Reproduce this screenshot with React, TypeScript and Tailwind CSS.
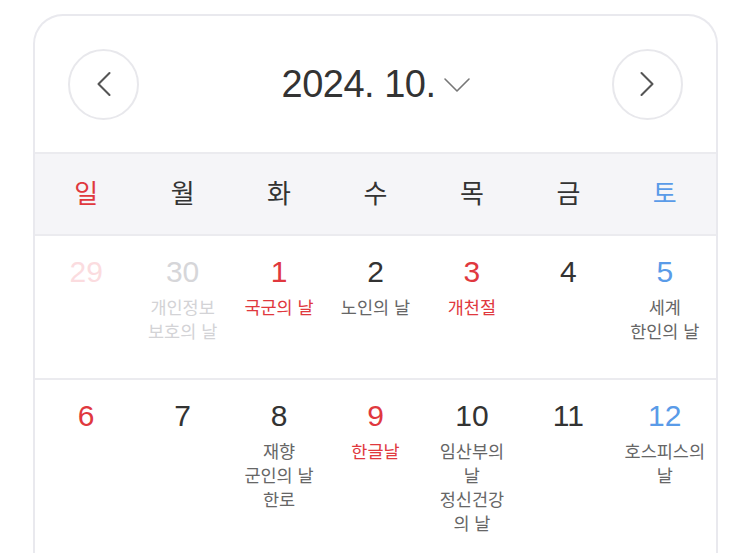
import { ChevronLeft, ChevronRight, ChevronDown } from "lucide-react";

type Day = {
  n: number;
  color: string;
  labels?: string[];
  labelColor?: string;
};

const weekdays = [
  { name: "일", color: "text-[#e0383e]" },
  { name: "월", color: "text-[#333333]" },
  { name: "화", color: "text-[#333333]" },
  { name: "수", color: "text-[#333333]" },
  { name: "목", color: "text-[#333333]" },
  { name: "금", color: "text-[#333333]" },
  { name: "토", color: "text-[#5a9be8]" },
];

const weeks: Day[][] = [
  [
    { n: 29, color: "text-[#fbdcdf]" },
    { n: 30, color: "text-[#d6d6d9]", labels: ["개인정보", "보호의 날"], labelColor: "text-[#d3d3d6]" },
    { n: 1, color: "text-[#e0383e]", labels: ["국군의 날"], labelColor: "text-[#e0383e]" },
    { n: 2, color: "text-[#333333]", labels: ["노인의 날"] },
    { n: 3, color: "text-[#e0383e]", labels: ["개천절"], labelColor: "text-[#e0383e]" },
    { n: 4, color: "text-[#333333]" },
    { n: 5, color: "text-[#5a9be8]", labels: ["세계", "한인의 날"] },
  ],
  [
    { n: 6, color: "text-[#e0383e]" },
    { n: 7, color: "text-[#333333]" },
    { n: 8, color: "text-[#333333]", labels: ["재향", "군인의 날", "한로"] },
    { n: 9, color: "text-[#e0383e]", labels: ["한글날"], labelColor: "text-[#e0383e]" },
    { n: 10, color: "text-[#333333]", labels: ["임산부의", "날", "정신건강", "의 날"] },
    { n: 11, color: "text-[#333333]" },
    { n: 12, color: "text-[#5a9be8]", labels: ["호스피스의", "날"] },
  ],
];

function NavButton({ children }: { children: React.ReactNode }) {
  return (
    <button className="w-[71px] h-[71px] rounded-full border-2 border-[#e8e8ec] flex items-center justify-center text-[#555555] bg-white">
      {children}
    </button>
  );
}

export default function App() {
  return (
    <div
      className="w-[744px] h-[553px] overflow-hidden bg-white pt-[14px] pl-[33px]"
      style={{ fontFamily: '"Liberation Sans", "Noto Sans CJK KR", sans-serif' }}
    >
      <div className="w-[685px] border-2 border-b-0 border-[#e9e9ee] rounded-t-[30px] bg-white">
        <div className="h-[136px] flex items-center justify-between px-[33px]">
          <NavButton>
            <ChevronLeft size={44} strokeWidth={1.15} />
          </NavButton>
          <div className="flex items-center">
            <span className="text-[38px] text-[#333333] tracking-[-0.5px]">2024. 10.</span>
            <ChevronDown size={48} strokeWidth={0.8} className="text-[#777777] mt-[2px] -ml-[2px] -mr-[12px]" />
          </div>
          <NavButton>
            <ChevronRight size={44} strokeWidth={1.15} />
          </NavButton>
        </div>

        <div className="h-[84px] bg-[#f5f5f8] border-y-2 border-[#ebebef] grid grid-cols-7 px-[3px] items-center">
          {weekdays.map((w) => (
            <div key={w.name} className={`text-center text-[26px] ${w.color}`}>
              {w.name}
            </div>
          ))}
        </div>

        {weeks.map((week, i) => (
          <div
            key={i}
            className={`grid grid-cols-7 px-[3px] ${i === 0 ? "h-[144px] border-b-2 border-[#ebebef]" : "h-[200px]"}`}
          >
            {week.map((d) => (
              <div key={d.n} className="flex flex-col items-center pt-[18px]">
                <div className={`text-[30px] leading-[36px] ${d.color}`}>{d.n}</div>
                {d.labels && (
                  <div className={`mt-[6px] text-[17.5px] leading-[24px] text-center ${d.labelColor ?? "text-[#666666]"}`}>
                    {d.labels.map((l) => (
                      <div key={l}>{l}</div>
                    ))}
                  </div>
                )}
              </div>
            ))}
          </div>
        ))}
      </div>
    </div>
  );
}
